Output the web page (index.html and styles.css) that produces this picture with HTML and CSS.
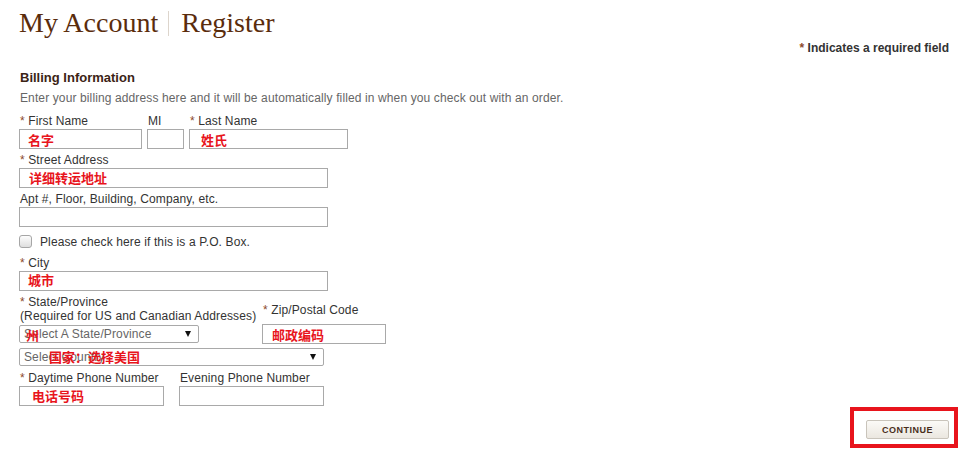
FILE: index.html
```html
<!DOCTYPE html>
<html>
<head>
	<meta charset="utf-8"/>
	<title>My Account | Register</title>
	<link rel="stylesheet" href="styles.css">
</head>
<body>
<div class="page">
	<h1 class="title">My Account<span class="sep"></span>Register</h1>
	<p class="req-note"><span class="star">*</span> Indicates a required field</p>

	<h2 class="section">Billing Information</h2>
	<p class="desc">Enter your billing address here and it will be automatically filled in when you check out with an order.</p>

	<form class="billing">
		<!-- 姓名 -->
		<div class="row">
			<div class="field">
				<label><span class="star">*</span> First Name</label>
				<div class="box">
					<input type="text" class="w-first">
					<span class="note">名字</span>
				</div>
			</div>
			<div class="field">
				<label>MI</label>
				<input type="text" class="w-mi">
			</div>
			<div class="field">
				<label><span class="star">*</span> Last Name</label>
				<div class="box">
					<input type="text" class="w-last">
					<span class="note note-last">姓氏</span>
				</div>
			</div>
		</div>

		<div class="field">
			<label><span class="star">*</span> Street Address</label>
			<div class="box">
				<input type="text" class="w-wide">
				<span class="note note-street">详细转运地址</span>
			</div>
		</div>

		<div class="field">
			<label>Apt #, Floor, Building, Company, etc.</label>
			<input type="text" class="w-wide">
		</div>

		<div class="check">
			<input type="checkbox" id="pobox">
			<label for="pobox">Please check here if this is a P.O. Box.</label>
		</div>

		<div class="field">
			<label><span class="star">*</span> City</label>
			<div class="box">
				<input type="text" class="w-wide">
				<span class="note note-city">城市</span>
			</div>
		</div>

		<!-- 州 / 邮编 -->
		<div class="row row-state">
			<div class="field col-state">
				<label><span class="star">*</span> State/Province<br>(Required for US and Canadian Addresses)</label>
				<div class="box sel">
					<select class="w-state"><option>Select A State/Province</option></select>
					<span class="note note-state">州</span>
				</div>
			</div>
			<div class="field col-zip">
				<label><span class="star">*</span> Zip/Postal Code</label>
				<div class="box">
					<input type="text" class="w-zip">
					<span class="note note-zip">邮政编码</span>
				</div>
			</div>
		</div>

		<div class="field">
			<div class="box sel">
				<select class="w-country"><option>Select Country</option></select>
				<span class="note note-country">国家：选择美国</span>
			</div>
		</div>

		<div class="row row-phone">
			<div class="field">
				<label><span class="star">*</span> Daytime Phone Number</label>
				<div class="box">
					<input type="text" class="w-phone">
					<span class="note note-phone">电话号码</span>
				</div>
			</div>
			<div class="field">
				<label>Evening Phone Number</label>
				<input type="text" class="w-phone">
			</div>
		</div>

		<div class="actions">
			<div class="mark">
				<button type="button" class="btn">CONTINUE</button>
			</div>
		</div>
	</form>
</div>
</body>
</html>
```

FILE: styles.css
```css
*{margin: 0;padding: 0;box-sizing: border-box;}
body{
	font-family: "Liberation Sans", Arial, sans-serif;
	font-size: 12px;
	letter-spacing: 0.12px;
	color: #333;
	background: #fff;
}
.page{
	padding: 0 21px 0 19px;
}
.title{
	font-family: "Liberation Serif", "Times New Roman", serif;
	font-weight: normal;
	font-size: 28px;
	line-height: 32px;
	letter-spacing: 0;
	padding-top: 7px;
	color: #5a2c0c;
	display: flex;
	align-items: center;
}
.title .sep{
	display: inline-block;
	width: 1px;
	height: 25px;
	background: #ddd5cc;
	margin: 0 12px 0 10px;
}
.star{
	color: #8c4a2a;
}
.req-note{
	margin-top: 2px;
	line-height: 14px;
	text-align: right;
	font-weight: bold;
	letter-spacing: 0;
	color: #333;
}
.section{
	margin-top: 15px;
	font-size: 13px;
	line-height: 16px;
	letter-spacing: 0;
	color: #3b2415;
	padding-left: 1px;
}
.desc{
	margin-top: 5px;
	line-height: 14px;
	color: #666;
	padding-left: 1px;
}
.billing{
	margin-top: 9px;
}
.row{
	display: flex;
	gap: 5px;
}
.field{
	margin-bottom: 4px;
}
.field label{
	display: block;
	line-height: 14px;
	margin-bottom: 1px;
	padding-left: 1px;
}
.box{
	position: relative;
}
input[type=text]{
	display: block;
	height: 20px;
	border: 1px solid #a9a9a9;
	background: #fff;
	font: inherit;
}
.w-first{width: 123px;}
.w-mi{width: 37px;}
.w-last{width: 159px;}
.w-wide{width: 309px;}
.w-zip{width: 124px;}
.w-phone{width: 145px;}

select{
	display: block;
	height: 18px;
	border: 1px solid #a9a9a9;
	border-radius: 2px;
	background: #fff;
	font-family: inherit;
	font-size: 12px;
	letter-spacing: 0.12px;
	color: #666;
	padding-left: 4px;
	-webkit-appearance: none;
	appearance: none;
}
.w-state{width: 180px;}
.w-country{width: 305px;}
.sel::after{
	content: "";
	position: absolute;
	top: 6px;
	border-left: 3.5px solid transparent;
	border-right: 3.5px solid transparent;
	border-top: 6px solid #111;
}
.col-state .sel::after{left: 166px;}
.field .sel:only-child::after{left: 291px;}

.check{
	display: flex;
	align-items: center;
	height: 21px;
	margin: 4px 0 4px;
}
.check input{
	-webkit-appearance: none;
	appearance: none;
	width: 13px;
	height: 13px;
	border: 1px solid #a6a6a6;
	border-radius: 3px;
	background: linear-gradient(#fdfdfd, #dedede);
	margin-right: 8px;
}
.check label{
	color: #333;
}

.row-state{
	gap: 0;
	align-items: flex-end;
}
.col-state{
	width: 243px;
}
.col-state .sel{
	margin-top: 2px;
	margin-bottom: 1px;
}
.col-zip label{
	margin-bottom: 7px;
}
.row-phone{
	gap: 15px;
	margin-top: 5px;
}

/* 红色标注 */
.note{
	position: absolute;
	left: 9px;
	top: 4px;
	font-family: "Noto Sans CJK SC", sans-serif;
	font-weight: bold;
	font-size: 13px;
	line-height: 13px;
	letter-spacing: 0;
	color: #e8141c;
	white-space: nowrap;
}
.note-last{left: 12px;}
.note-street{left: 10px;top: 3px;}
.note-city{top: 2px;}
.note-state{left: 7px;top: 3px;}
.note-zip{left: 10px;top: 4px;}
.note-country{left: 30px;top: 2px;}
.note-phone{left: 13px;top: 3px;}

.actions{
	display: flex;
	justify-content: flex-end;
	margin: -3px -9px 0 0;
}
.mark{
	border: 4px solid #e8141c;
	padding: 9px 5px 5px 12px;
}
.btn{
	display: block;
	width: 83px;
	height: 19px;
	border: 1px solid #c9c4bb;
	border-radius: 2px;
	background: linear-gradient(#fbfaf7, #ebe7e0);
	font-family: "Liberation Sans", Arial, sans-serif;
	font-size: 9px;
	font-weight: bold;
	letter-spacing: 0.5px;
	color: #4a2e1c;
}
```
